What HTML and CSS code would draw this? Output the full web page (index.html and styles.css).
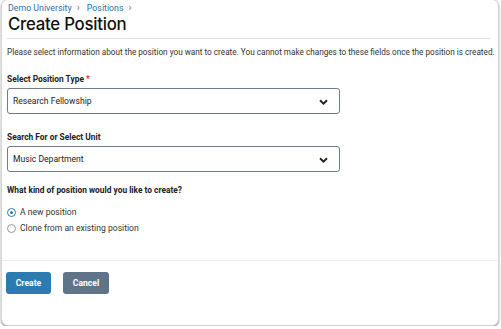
FILE: index.html
```html
<!DOCTYPE html>
<html lang="en">
<head>
  <meta charset="UTF-8">
  <title>Create Position</title>
  <link rel="stylesheet" href="styles.css">
</head>
<body>
  <div class="card">
    <div class="header">
      <nav class="crumbs">
        <a href="#">Demo University</a><span class="sep">&rsaquo;</span>
        <a href="#">Positions</a><span class="sep">&rsaquo;</span>
      </nav>
      <h1>Create Position</h1>
    </div>

    <div class="body">
      <p class="intro">Please select information about the position you want to create. You cannot make changes to these fields once the position is created.</p>

      <div class="form-group">
        <label class="field-label">Select Position Type <span class="req">*</span></label>
        <div class="select">
          <span>Research Fellowship</span>
          <svg class="chev" width="9" height="6" viewBox="0 0 9 6"><path d="M1 1.2 L4.5 4.6 L8 1.2" fill="none" stroke="#222" stroke-width="1.9"/></svg>
        </div>
      </div>

      <div class="form-group unit">
        <label class="field-label">Search For or Select Unit</label>
        <div class="select">
          <span>Music Department</span>
          <svg class="chev" width="9" height="6" viewBox="0 0 9 6"><path d="M1 1.2 L4.5 4.6 L8 1.2" fill="none" stroke="#222" stroke-width="1.9"/></svg>
        </div>
      </div>

      <div class="form-group">
        <label class="field-label">What kind of position would you like to create?</label>
        <div class="radios">
          <label class="radio"><span class="dot checked"></span>A new position</label>
          <label class="radio"><span class="dot"></span>Clone from an existing position</label>
        </div>
      </div>
    </div>

    <div class="footer">
      <button class="btn primary">Create</button>
      <button class="btn secondary">Cancel</button>
    </div>
  </div>
</body>
</html>
```

FILE: styles.css
```css
body { margin: 0; font-family: Roboto, "Liberation Sans", sans-serif; color: #222; background: #fff; }
.card { margin: -1px 2px 0 1px; height: 327px; box-sizing: border-box; border: 1px solid #d4d4d4; border-radius: 7px; box-shadow: 0 1px 2px rgba(0,0,0,0.45); background: #fff; display: flex; flex-direction: column; }
.header { padding: 2px 8px 0 5px; }
.crumbs { font-size: 8.8px; line-height: 12px; padding-left: 1px; }
.crumbs a { color: #2c72a8; text-decoration: none; }
.sep { color: #777; margin: 0 5px; font-size: 10px; }
h1 { margin: 0; font-family: Inter, Roboto, sans-serif; font-weight: 500; font-size: 16.8px; letter-spacing: -0.25px; line-height: 20px; color: #111; padding: 0 0 4px 1px; border-bottom: 1px solid #e2e2e2; }
.body { padding: 0 5px; }
.intro { font-size: 8.2px; line-height: 13px; margin: 7px 0 14px; color: #333; white-space: nowrap; }
.form-group { margin-bottom: 17px; }
.form-group.unit { margin-bottom: 12px; }
.field-label { display: block; font-size: 8.4px; font-weight: 700; line-height: 12px; margin-bottom: 3px; color: #222; }
.req { color: #d32f2f; }
.select { width: 333px; height: 26px; box-sizing: border-box; border: 1px solid #6d7b8a; border-radius: 3px; display: flex; align-items: center; justify-content: space-between; padding: 0 11px 0 5px; font-size: 8.6px; color: #222; }
.chev { margin-top: 1px; }
.radios { display: flex; flex-direction: column; gap: 3px; margin-top: 10px; }
.radio { display: flex; align-items: center; font-size: 8.6px; line-height: 13px; color: #333; }
.dot { width: 9px; height: 9px; box-sizing: border-box; border: 1px solid #9a9a9a; border-radius: 50%; margin: 0 4px 0 0; position: relative; }
.dot.checked { border-color: #2c7ab5; border-width: 1.5px; }
.dot.checked::after { content: ""; position: absolute; left: 1.5px; top: 1.5px; width: 3px; height: 3px; border-radius: 50%; background: #2c7ab5; }
.footer { margin-top: auto; margin-bottom: 31px; padding: 11px 5px 0 4px; border-top: 1px solid #ececec; display: flex; gap: 12px; }
.btn { font-family: Roboto, sans-serif; font-size: 8.6px; font-weight: 700; color: #fff; border: none; border-radius: 3px; height: 22px; padding: 0; }
.primary { background: #2b7ab0; width: 45px; }
.secondary { background: #5f7489; width: 46px; }
```
